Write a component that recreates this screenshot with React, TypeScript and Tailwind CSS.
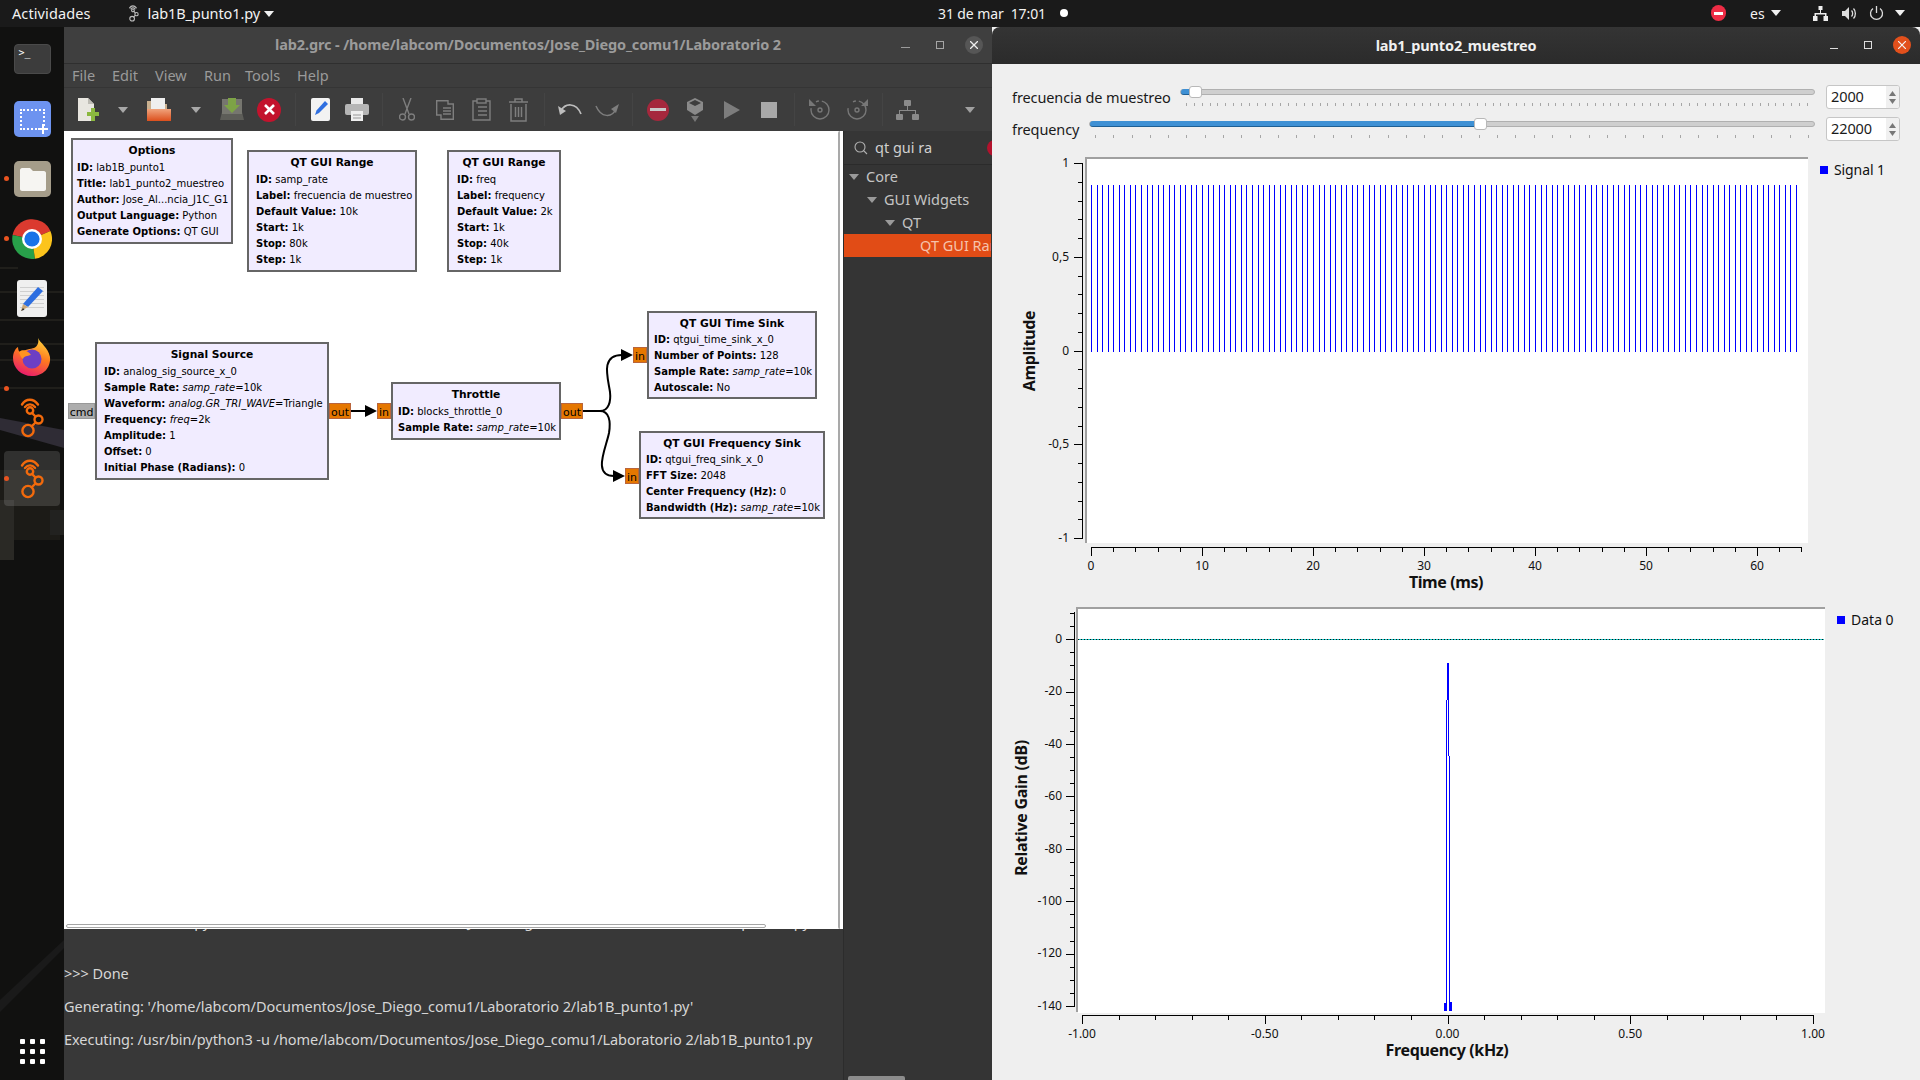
import React from "react";

const Triangle = ({ className = "" }: { className?: string }) => (
  <svg width="10" height="6" viewBox="0 0 10 6" className={className}><path d="M0 0H10L5 6Z" fill="currentColor" /></svg>
);

const GnuRadio = ({ className = "", color = "#f26a0c", w = 25, h = 40, sw = 2.4 }: { className?: string; color?: string; w?: number; h?: number; sw?: number }) => (
  <svg width={w} height={h} viewBox="0 0 24 40" className={className} fill="none" stroke={color} strokeWidth={sw} strokeLinecap="round">
    <path d="M1.5 6.5C5.5 0.2 13 0.2 17.5 6.5" />
    <path d="M4.5 9C7.5 5.5 11.5 5.5 14.5 9" />
    <circle cx="9.5" cy="12.5" r="3.2" />
    <circle cx="18" cy="21.5" r="4" />
    <circle cx="7.5" cy="32.5" r="5.6" />
    <path d="M11.5 15L15 18.5M15 24.5L11.5 28" />
  </svg>
);

const Dock = () => (
  <div className="relative w-[64px] shrink-0 bg-[#111110] overflow-hidden flex flex-col items-center">
    <svg className="absolute left-0 top-0" width="64" height="1053" viewBox="0 27 64 1053">
      <g stroke="#26251f" strokeWidth="1.5" fill="none">
        <path d="M0 268H18M0 292H64M0 320H64M0 344H64M0 360H64M0 388H64" />
      </g>
      <path d="M0 418L64 430V448L0 430Z" fill="#2f2c35" />
      <path d="M0 470H60V540H0Z" fill="#1c1b17" />
      <path d="M0 500H14V560H0Z" fill="#2a2925" />
      <path d="M50 510H64V535H50Z" fill="#222220" />
      <path d="M0 1000L64 940V948L0 1012Z" fill="#1a1a1a" />
    </svg>
    {/* terminal */}
    <div className="relative mt-[17px] w-[37px] h-[30px] rounded-[4px] bg-[#3c3c3c] border border-[#4a4a4a]">
      <span className="absolute left-[4px] top-[1px] text-white text-[10px] leading-[14px] font-['DejaVu_Sans_Mono',monospace]">&gt;_</span>
    </div>
    {/* screenshot */}
    <div className="relative mt-[27px] w-[37px] h-[36px] rounded-[5px] bg-[#6d93f0] flex items-center justify-center">
      <div className="w-[25px] h-[21px] border-2 border-dotted border-white" />
      <svg className="absolute right-[3px] bottom-[3px]" width="10" height="10"><path d="M5 0V10M0 5H10" stroke="#fff" strokeWidth="2" /></svg>
    </div>
    {/* files */}
    <div className="relative mt-[24px] w-[37px] h-[36px] rounded-[5px] bg-[#a59d8a] flex items-center justify-center">
      <svg width="27" height="23" viewBox="0 0 27 23"><path d="M1 2C1 1 2 0 3 0H11L14 3H25C26 3 27 4 27 5V21C27 22 26 23 25 23H3C2 23 1 22 1 21Z" fill="#f6f5f2" /></svg>
    </div>
    {/* chrome */}
    <svg className="relative mt-[22px]" width="40" height="40" viewBox="-20 -20 40 40">
      <path d="M0 0L-19.4 -4A20 20 0 0 1 18.4 -8Z" fill="#db3a2f" />
      <path d="M0 0L-19.4 -4A20 20 0 0 0 3 19.8Z" fill="#28a04a" />
      <path d="M0 0L18.4 -8A20 20 0 0 1 3 19.8Z" fill="#fcc41c" />
      <circle r="10" fill="#fff" />
      <circle r="7.6" fill="#1a73e8" />
    </svg>
    {/* gedit */}
    <div className="relative mt-[21px] w-[30px] h-[37px] rounded-[3px] bg-[#efefef] flex flex-col gap-[3px] pt-[7px] px-[3px]">
      <div className="h-px bg-[#cfcfcf]" /><div className="h-px bg-[#cfcfcf]" /><div className="h-px bg-[#cfcfcf]" /><div className="h-px bg-[#cfcfcf]" /><div className="h-px bg-[#cfcfcf]" /><div className="h-px bg-[#cfcfcf]" />
      <svg className="absolute left-[4px] top-[7px]" width="23" height="25" viewBox="0 0 23 25"><path d="M17 0L22 4L7 20L2 17Z" fill="#2d6ee0" /><path d="M2 17L7 20L0 24Z" fill="#caa777" /><path d="M0 24L2 21L3.5 22.8Z" fill="#333" /></svg>
    </div>
    {/* firefox */}
    <svg className="relative mt-[21px]" width="38" height="39" viewBox="0 0 38 39">
      <defs>
        <linearGradient id="ff" x1="0.7" y1="0" x2="0.3" y2="1"><stop offset="0" stopColor="#ffd23c" /><stop offset="0.45" stopColor="#ff7a1e" /><stop offset="1" stopColor="#e8186f" /></linearGradient>
      </defs>
      <path d="M25 0C27 5 35 9 37 19C38 30 30 38 19 38C8 38 0 30 0 20C0 15 2 11 5 9C5 12 6 14 8 15C11 11 18 11 21 10C25 8 26 4 25 0Z" fill="url(#ff)" />
      <circle cx="19" cy="21" r="9.5" fill="#6c3fc4" />
      <path d="M6 14C10 10 16 14 18 17C14 18 11 18 10 21C8 20 7 17 6 14Z" fill="#ff9420" />
    </svg>
    <GnuRadio className="relative mt-[21px]" />
    <div className="relative mt-[13px] w-[56px] h-[55px] rounded-[4px] bg-[#ffffff22] flex items-center justify-center">
      <GnuRadio />
    </div>
    <div className="absolute left-[4px] top-[149px] w-[5px] h-[5px] rounded-full bg-[#e95420]" />
    <div className="absolute left-[4px] top-[209px] w-[5px] h-[5px] rounded-full bg-[#e95420]" />
    <div className="absolute left-[4px] top-[359px] w-[5px] h-[5px] rounded-full bg-[#e95420]" />
    <div className="absolute left-[4px] top-[449px] w-[5px] h-[5px] rounded-full bg-[#e95420]" />
    <div className="mt-auto mb-[16px] relative grid grid-cols-3 gap-x-[5px] gap-y-[5px]">
      {Array.from({ length: 9 }).map((_, i) => <div key={i} className="w-[5px] h-[5px] rounded-[1px] bg-white" />)}
    </div>
  </div>
);

const TopBar = () => (
  <div className="h-[27px] shrink-0 bg-[#1a1a1a] text-[#f2f2f2] text-[14.5px] flex items-center relative">
    <span className="ml-[12px] tracking-[0.1px]">Actividades</span>
    <GnuRadio className="ml-[38px] mr-[9px]" color="#bdbdbd" w={10} h={17} sw={2.6} />
    <span className="tracking-[-0.1px]">lab1B_punto1.py</span>
    <Triangle className="ml-[4px]" />
    <span className="absolute left-[938px] tracking-[-0.1px] text-[14px]">31 de mar&nbsp; 17:01</span>
    <div className="absolute left-[1060px] top-[9px] w-[8px] h-[8px] rounded-full bg-white" />
    <div className="absolute left-[1711px] top-[5px] w-[15px] h-[16px] rounded-full bg-[#ee2c45] flex items-center justify-center"><div className="w-[9px] h-[3px] bg-white" /></div>
    <span className="absolute left-[1750px] text-[14px]">es</span>
    <Triangle className="absolute left-[1771px] top-[10px]" />
    <svg className="absolute left-[1813px] top-[6px]" width="15" height="15" viewBox="0 0 15 15" fill="#eee"><path d="M5.5 0H9.5V4H8V7H13.5V10H15V15H10.5V10H12V8.5H3V10H4.5V15H0V10H1.5V7H7V4H5.5Z" /></svg>
    <svg className="absolute left-[1842px] top-[6px]" width="15" height="15" viewBox="0 0 15 15" fill="none" stroke="#ddd" strokeWidth="1.3"><path d="M0 5H3L7 1V14L3 10H0Z" fill="#ddd" stroke="none" /><path d="M9.5 4.5C11 6 11 9 9.5 10.5M11.5 2.5C14 5 14 10 11.5 12.5" /></svg>
    <svg className="absolute left-[1869px] top-[5px]" width="15" height="16" viewBox="0 0 15 16" fill="none" stroke="#ddd" strokeWidth="1.3"><path d="M7.5 1V8M4 3.5A6 6 0 1 0 11 3.5" /></svg>
    <Triangle className="absolute left-[1895px] top-[10px]" />
  </div>
);

const D = "#7e7e7e";
const Tb = () => (
  <div className="h-[43px] shrink-0 flex items-center pl-[6px] bg-[#3d3d3d] text-[#b8b8b8]">
    <div className="w-[35px] flex justify-center"><svg width="22" height="24" viewBox="0 0 22 24"><path d="M1 0H11L17 6V23H1Z" fill="#e8e6e0" /><path d="M11 0L17 6H11Z" fill="#bdbbb4" /><path d="M14 10H18V14H22V18H18V23H14V18H10V14H14Z" fill="#8bb83f" /></svg></div>
    <div className="w-[35px] flex justify-center text-[#a8a8a8]"><Triangle /></div>
    <div className="w-[38px] flex justify-center"><svg width="24" height="23" viewBox="0 0 24 23"><defs><linearGradient id="opn" x1="0" y1="0" x2="0" y2="1"><stop offset="0" stopColor="#f0a37c" /><stop offset="1" stopColor="#dc4f1c" /></linearGradient></defs><path d="M0 3H8L9 6H20V13H0Z" fill="#c9b08f" /><path d="M4 0H18V13H4Z" fill="#efefef" /><path d="M0 11H24V23H0Z" fill="url(#opn)" /></svg></div>
    <div className="w-[35px] flex justify-center text-[#a8a8a8]"><Triangle /></div>
    <div className="w-[38px] flex justify-center"><svg width="24" height="23" viewBox="0 0 24 23"><path d="M2 14H22L24 22H0Z" fill="#5d5d58" /><path d="M2 1H22V16H2Z" fill="#76766f" /><path d="M8 0H16V7H20L12 15L4 7H8Z" fill="#7da346" /></svg></div>
    <div className="w-[36px] flex justify-center"><div className="w-[24px] h-[24px] rounded-full bg-[#c3132d] flex items-center justify-center"><svg width="11" height="11"><path d="M1 1L10 10M10 1L1 10" stroke="#fff" strokeWidth="2.6" /></svg></div></div>
    <div className="w-[16px] flex justify-center"><div className="w-px h-[33px] bg-[#444]" /></div>
    <div className="w-[35px] flex justify-center"><svg width="20" height="23" viewBox="0 0 20 23"><rect width="19" height="23" rx="2" fill="#f2f2f2" /><path d="M14 3L17 6L8 15L4 17L5.5 12.5Z" fill="#2f6fe0" /></svg></div>
    <div className="w-[38px] flex justify-center"><svg width="24" height="23" viewBox="0 0 24 23"><rect x="6" width="12" height="7" fill="#e8e8e8" /><rect y="6" width="24" height="11" rx="2" fill="#b5b5b5" /><rect x="6" y="13" width="12" height="10" fill="#efefef" /><path d="M8 17H16M8 20H16" stroke="#999" /></svg></div>
    <div className="w-[12px] flex justify-center"><div className="w-px h-[33px] bg-[#444]" /></div>
    <div className="w-[38px] flex justify-center"><svg width="16" height="23" viewBox="0 0 16 23" fill="none" stroke={D} strokeWidth="1.4"><path d="M4 0L10 16M12 0L6 16" /><circle cx="3.5" cy="19" r="3" /><circle cx="12.5" cy="19" r="3" /></svg></div>
    <div className="w-[37px] flex justify-center"><svg width="18" height="20" viewBox="0 0 18 20" fill="none" stroke={D} strokeWidth="1.4"><path d="M0.7 0.7H12V4H17.3V19.3H5V15H0.7Z" /><path d="M7 8H15M7 11H15M7 14H15" /></svg></div>
    <div className="w-[37px] flex justify-center"><svg width="19" height="23" viewBox="0 0 19 23" fill="none" stroke={D} strokeWidth="1.4"><path d="M5 3H1V22H18V3H14" /><rect x="5" y="1" width="9" height="4" /><path d="M6 9H15M6 13H15M6 17H15" /></svg></div>
    <div className="w-[37px] flex justify-center"><svg width="19" height="24" viewBox="0 0 19 24" fill="none" stroke={D} strokeWidth="1.5"><path d="M0 4H19M6 4V1H13V4M2 6V23H17V6M6.5 9V19M9.5 9V19M12.5 9V19" /></svg></div>
    <div className="w-[14px] flex justify-center"><div className="w-px h-[33px] bg-[#444]" /></div>
    <div className="w-[37px] flex justify-center"><svg width="24" height="14" viewBox="0 0 24 14" fill="none" stroke="#bdbdbd" strokeWidth="1.7"><path d="M3 8C7 0 18 -1 23 11" /><path d="M0 3L2 12L8 8Z" fill="#bdbdbd" stroke="none" /></svg></div>
    <div className="w-[37px] flex justify-center"><svg width="24" height="14" viewBox="0 0 24 14" fill="none" stroke={D} strokeWidth="1.5"><path d="M1 3C6 15 17 15 21 6" /><path d="M24 1L21 10L16 6Z" fill={D} stroke="none" /></svg></div>
    <div className="w-[14px] flex justify-center"><div className="w-px h-[33px] bg-[#444]" /></div>
    <div className="w-[38px] flex justify-center"><div className="w-[22px] h-[22px] rounded-full bg-[#a5283d] flex items-center justify-center"><div className="w-[16px] h-[3px] bg-[#c9c9c9]" /></div></div>
    <div className="w-[36px] flex justify-center"><svg width="16" height="24" viewBox="0 0 16 24"><path d="M8 0L16 4V12L8 17L0 12V4Z" fill="#8a8a8a" /><path d="M8 2L14 5L8 8L2 5Z" fill="#3d3d3d" /><path d="M4 18H12L8 24Z" fill="#777" /></svg></div>
    <div className="w-[38px] flex justify-center"><svg width="16" height="18" viewBox="0 0 16 18"><path d="M0 0L16 9L0 18Z" fill="#7d7d7d" /></svg></div>
    <div className="w-[36px] flex justify-center"><div className="w-[16px] h-[16px] bg-[#a8a8a8]" /></div>
    <div className="w-[14px] flex justify-center"><div className="w-px h-[33px] bg-[#444]" /></div>
    <div className="w-[38px] flex justify-center"><svg width="22" height="21" viewBox="0 0 22 21" fill="none" stroke="#777" strokeWidth="1.4"><circle cx="11" cy="11" r="9" strokeDasharray="30 8 3 3" /><circle cx="11" cy="11" r="2" /><path d="M0 0V7H7Z" fill="#777" stroke="none" /></svg></div>
    <div className="w-[36px] flex justify-center"><svg width="22" height="21" viewBox="0 0 22 21" fill="none" stroke="#777" strokeWidth="1.4"><circle cx="11" cy="11" r="9" strokeDasharray="30 8 3 3" /><circle cx="11" cy="11" r="2" /><path d="M22 0V7H15Z" fill="#777" stroke="none" /></svg></div>
    <div className="w-[14px] flex justify-center"><div className="w-px h-[33px] bg-[#444]" /></div>
    <div className="w-[36px] flex justify-center"><svg width="23" height="20" viewBox="0 0 23 20" fill="#8a8a8a"><rect x="8" width="7" height="6" rx="1" /><rect y="14" width="7" height="6" rx="1" /><rect x="16" y="14" width="7" height="6" rx="1" /><path d="M11 6H12V10H20V14H19V11H4V14H3V10H11Z" /></svg></div>
    <div className="ml-[40px] text-[#a0a0a0]"><Triangle /></div>
  </div>
);

const Block = ({ className, pad, title, rows }: { className: string; pad: string; title: string; rows: React.ReactNode[] }) => (
  <div className={`absolute bg-[#f1ecff] border-2 border-[#666666] text-black text-[10px] leading-[16px] pt-[3px] font-['DejaVu_Sans',sans-serif] whitespace-nowrap ${className}`}>
    <div className="text-center font-bold text-[10.7px]">{title}</div>
    <div className={pad}>
      {rows.map((r, i) => <div key={i}>{r}</div>)}
    </div>
  </div>
);
const K = ({ k, v, i }: { k: string; v?: string; i?: string }) => (
  <><b>{k}:</b> {i ? <i>{i}</i> : null}{v}</>
);
const Port = ({ className, label }: { className: string; label: string }) => (
  <div className={`absolute h-[16px] border border-[#b9653c] bg-[#e57700] text-black text-[11px] leading-[15px] pt-px text-center font-['DejaVu_Sans',sans-serif] ${className}`}>{label}</div>
);

const Canvas = () => (
  <div className="relative h-[798px] shrink-0 bg-white overflow-hidden">
    <Block className="left-[7px] top-[7px] w-[162px] h-[106px]" pad="pl-[4px] pt-px" title="Options" rows={[
      <K k="ID" v="lab1B_punto1" />, <K k="Title" v="lab1_punto2_muestreo" />, <K k="Author" v="Jose_Al...ncia_J1C_G1" />, <K k="Output Language" v="Python" />, <K k="Generate Options" v="QT GUI" />]} />
    <Block className="left-[183px] top-[19px] w-[170px] h-[122px]" pad="pl-[7px] pt-px" title="QT GUI Range" rows={[
      <K k="ID" v="samp_rate" />, <K k="Label" v="frecuencia de muestreo" />, <K k="Default Value" v="10k" />, <K k="Start" v="1k" />, <K k="Stop" v="80k" />, <K k="Step" v="1k" />]} />
    <Block className="left-[383px] top-[19px] w-[114px] h-[122px]" pad="pl-[8px] pt-px" title="QT GUI Range" rows={[
      <K k="ID" v="freq" />, <K k="Label" v="frequency" />, <K k="Default Value" v="2k" />, <K k="Start" v="1k" />, <K k="Stop" v="40k" />, <K k="Step" v="1k" />]} />
    <Block className="left-[31px] top-[211px] w-[234px] h-[138px]" pad="pl-[7px] pt-px" title="Signal Source" rows={[
      <K k="ID" v="analog_sig_source_x_0" />, <K k="Sample Rate" i="samp_rate" v="=10k" />, <K k="Waveform" i="analog.GR_TRI_WAVE" v="=Triangle" />, <K k="Frequency" i="freq" v="=2k" />, <K k="Amplitude" v="1" />, <K k="Offset" v="0" />, <K k="Initial Phase (Radians)" v="0" />]} />
    <Block className="left-[327px] top-[251px] w-[170px] h-[58px]" pad="pl-[5px] pt-px" title="Throttle" rows={[
      <K k="ID" v="blocks_throttle_0" />, <K k="Sample Rate" i="samp_rate" v="=10k" />]} />
    <Block className="left-[583px] top-[180px] w-[170px] h-[88px]" pad="pl-[5px]" title="QT GUI Time Sink" rows={[
      <K k="ID" v="qtgui_time_sink_x_0" />, <K k="Number of Points" v="128" />, <K k="Sample Rate" i="samp_rate" v="=10k" />, <K k="Autoscale" v="No" />]} />
    <Block className="left-[575px] top-[300px] w-[186px] h-[88px]" pad="pl-[5px]" title="QT GUI Frequency Sink" rows={[
      <K k="ID" v="qtgui_freq_sink_x_0" />, <K k="FFT Size" v="2048" />, <K k="Center Frequency (Hz)" v="0" />, <K k="Bandwidth (Hz)" i="samp_rate" v="=10k" />]} />
    <div className="absolute left-[4px] top-[272px] w-[27px] h-[16px] border border-[#999] bg-[#adadad] text-black text-[11px] leading-[15px] pt-px text-center font-['DejaVu_Sans',sans-serif]">cmd</div>
    <Port className="left-[265px] top-[272px] w-[22px]" label="out" />
    <Port className="left-[313px] top-[272px] w-[14px]" label="in" />
    <Port className="left-[497px] top-[272px] w-[22px]" label="out" />
    <Port className="left-[569px] top-[216px] w-[14px]" label="in" />
    <Port className="left-[561px] top-[337px] w-[14px]" label="in" />
    <svg className="absolute left-0 top-0" width="775" height="798" viewBox="64 131 775 798" fill="none" stroke="#000" strokeWidth="2">
      <path d="M351 411H366" />
      <path d="M365 405L377 411L365 417Z" fill="#000" stroke="none" />
      <path d="M583 411H600C609 411 611 401 610 392C608 378 600 355 622 355" />
      <path d="M621 349L633 355L621 361Z" fill="#000" stroke="none" />
      <path d="M583 411H600C609 411 611 421 609 433C606 448 592 476 614 476" />
      <path d="M613 470L625 476L613 482Z" fill="#000" stroke="none" />
    </svg>
    <div className="absolute left-[774px] top-0 bottom-0 w-[4px] bg-white border-l-2 border-[#a9a9a9] rounded-sm" />
    <div className="absolute left-[2px] top-[793px] w-[700px] h-[4px] border border-[#a5a5a5] rounded-[2px]" />
  </div>
);

const ConsoleLine = ({ children, className = "" }: { children: React.ReactNode; className?: string }) => (
  <div className={`leading-[33px] ${className}`}>{children}</div>
);

const LeftWindow = () => (
  <div className="w-[928px] shrink-0 flex flex-col bg-[#3d3d3d] font-['Noto_Sans',sans-serif]">
    <div className="h-[37px] shrink-0 bg-[#3f3f3f] border-b border-[#2f2f2f] relative flex items-center justify-center">
      <span className="text-[14.5px] font-bold text-[#9b9b9b] tracking-[-0.13px]">lab2.grc - /home/labcom/Documentos/Jose_Diego_comu1/Laboratorio 2</span>
      <div className="absolute left-[837px] top-[20px] w-[9px] h-px bg-[#9b9b9b]" />
      <div className="absolute left-[872px] top-[14px] w-[8px] h-[8px] border border-[#a5a5a5]" />
      <div className="absolute left-[901px] top-[9px] w-[18px] h-[18px] rounded-full bg-[#565656] flex items-center justify-center">
        <svg width="8" height="8"><path d="M0 0L8 8M8 0L0 8" stroke="#eee" strokeWidth="1.3" /></svg>
      </div>
    </div>
    <div className="h-[24px] shrink-0 border-b border-[#353535] flex items-center pl-[8px] text-[14.5px] text-[#9a9a9a]">
      <span className="w-[40px]">File</span>
      <span className="w-[43px]">Edit</span>
      <span className="w-[49px]">View</span>
      <span className="w-[41px]">Run</span>
      <span className="w-[52px]">Tools</span>
      <span>Help</span>
    </div>
    <Tb />
    <div className="flex-1 flex min-h-0">
      <div className="w-[779px] shrink-0 flex flex-col min-h-0">
        <Canvas />
        <div className="flex-1 bg-[#383838] overflow-hidden text-[14.5px] text-[#d6d6d6] tracking-[-0.05px] whitespace-pre">
          <ConsoleLine className="-mt-[24px] mb-[19px] pl-[71px]">/usr/bin/python3 -u /home/labcom/Documentos/Jose_Diego_comu1/Laboratorio 2/lab1B_punto1.py</ConsoleLine>
          <ConsoleLine>&gt;&gt;&gt; Done</ConsoleLine>
          <ConsoleLine>Generating: '/home/labcom/Documentos/Jose_Diego_comu1/Laboratorio 2/lab1B_punto1.py'</ConsoleLine>
          <ConsoleLine>Executing: /usr/bin/python3 -u /home/labcom/Documentos/Jose_Diego_comu1/Laboratorio 2/lab1B_punto1.py</ConsoleLine>
        </div>
      </div>
      <div className="relative flex-1 min-w-0 bg-[#343434] border-l border-[#2c2c2c] overflow-hidden text-[14.5px] text-[#c4c4c4] whitespace-nowrap">
        <div className="relative h-[34px] rounded-tl-[5px] border-b border-[#2b2b2b] flex items-center bg-[#363636]">
          <svg className="ml-[10px]" width="14" height="14" viewBox="0 0 14 14" fill="none" stroke="#b0b0b0" strokeWidth="1.1"><circle cx="6" cy="6" r="5" /><path d="M9.5 9.5L13 13" /></svg>
          <span className="ml-[7px] text-[#d0d0d0]">qt gui ra</span>
          <div className="absolute left-[143px] top-[9px] w-[16px] h-[16px] rounded-full bg-[#b3122d]" />
        </div>
        <div className="h-[23px] flex items-center"><Triangle className="ml-[5px] mr-[7px] text-[#9a9a9a]" />Core</div>
        <div className="h-[23px] flex items-center"><Triangle className="ml-[23px] mr-[7px] text-[#9a9a9a]" />GUI Widgets</div>
        <div className="h-[23px] flex items-center"><Triangle className="ml-[41px] mr-[7px] text-[#9a9a9a]" />QT</div>
        <div className="h-[23px] flex items-center bg-[#e14c16] pl-[76px] text-[#f6c3ac] w-[147px]"><span className="overflow-hidden w-[71px]">QT GUI Range</span></div>
        <div className="absolute left-[4px] bottom-0 w-[57px] h-[4px] rounded-t-[2px] bg-[#8c8c8c]" />
      </div>
    </div>
  </div>
);

const Slider = ({ ticks, fillClass, handleClass, trackClass }: { ticks: number; fillClass: string; handleClass: string; trackClass: string }) => (
  <div className={`flex flex-col ${trackClass}`}>
    <div className="relative h-[6px] mt-[4px] rounded-[3px] bg-[#cfcfcf] border border-[#b0b0b0]">
      <div className={`absolute left-0 -top-px h-[6px] rounded-l-[3px] bg-[#3e90d4] border-b border-[#1e5f94] ${fillClass}`} />
      <div className={`absolute -top-[4px] w-[13px] h-[12px] rounded-[3px] bg-white border border-[#b8b8b8] ${handleClass}`} />
    </div>
    <div className="mt-[8px] mx-[6px] h-[3px] flex justify-between">
      {Array.from({ length: ticks }).map((_, i) => <div key={i} className="w-px h-[3px] bg-[#a6a6a6]" />)}
    </div>
  </div>
);

const Spin = ({ value }: { value: string }) => (
  <div className="w-[74px] h-[24px] ml-[11px] shrink-0 bg-white border border-[#c6c6c6] rounded-[3px] flex items-center overflow-hidden">
    <span className="ml-[4px] flex-1 text-[14.5px] text-[#1a1a1a] tracking-[-0.1px]">{value}</span>
    <div className="w-[13px] h-full bg-[#f0f0f0] flex flex-col items-center justify-center gap-[3px] text-[#777]">
      <svg width="7" height="5"><path d="M0 5L3.5 0L7 5Z" fill="currentColor" /></svg>
      <svg width="7" height="5"><path d="M0 0L3.5 5L7 0Z" fill="currentColor" /></svg>
    </div>
  </div>
);

const range = (n: number) => Array.from({ length: n }, (_, i) => i);

const TimePlot = () => (
  <svg className="block w-[928px] h-[450px]" viewBox="992 150 928 450" fontFamily="'Noto Sans',sans-serif" fill="#111">
    <rect x="1087" y="159" width="721" height="384" fill="#fff" />
    <rect x="1085" y="157" width="723" height="2" fill="#a0a0a0" />
    <rect x="1085" y="157" width="2" height="386" fill="#a0a0a0" />
    <g stroke="#0000ff" strokeWidth="1" shapeRendering="crispEdges">
      {range(128).map(i => { const x = Math.round(1091 + i * 5.55) + 0.5; return <line key={i} x1={x} x2={x} y1="185" y2="352" />; })}
    </g>
    <g stroke="#000" shapeRendering="crispEdges">
      <line x1="1082.5" x2="1082.5" y1="163" y2="539" />
      {range(21).map(i => { const y = Math.round(163 + i * 18.75) + 0.5; return <line key={i} x1={i % 5 === 0 ? 1074 : 1078} x2="1082" y1={y} y2={y} />; })}
      <line x1="1091" x2="1802" y1="547.5" y2="547.5" />
      {range(33).map(i => { const x = Math.round(1091 + i * 22.2) + 0.5; return <line key={i} x1={x} x2={x} y1="547" y2={i % 5 === 0 ? 556 : 552} />; })}
    </g>
    <g fontSize="12" textAnchor="end">
      {[["1", 163], ["0,5", 257], ["0", 351], ["-0,5", 444], ["-1", 538]].map(([t, y]) => <text key={t as string} x="1069" y={(y as number) + 4}>{t}</text>)}
    </g>
    <g fontSize="12" textAnchor="middle">
      {[0, 10, 20, 30, 40, 50, 60].map(v => <text key={v} x={1091 + v * 11.1} y="570">{v}</text>)}
    </g>
    <text x="1446" y="588" fontSize="16" fontWeight="700" textAnchor="middle" letterSpacing="-0.4">Time (ms)</text>
    <text transform="translate(1035 351) rotate(-90)" fontSize="16" fontWeight="700" textAnchor="middle" letterSpacing="-0.3">Amplitude</text>
    <rect x="1820" y="166" width="8" height="8" fill="#0000ff" />
    <text x="1834" y="175" fontSize="14" letterSpacing="-0.1">Signal 1</text>
  </svg>
);

const FreqPlot = () => (
  <svg className="block w-[928px] h-[480px]" viewBox="992 600 928 480" fontFamily="'Noto Sans',sans-serif" fill="#111">
    <rect x="1078" y="609" width="747" height="404" fill="#fff" />
    <rect x="1076" y="607" width="749" height="2" fill="#a0a0a0" />
    <rect x="1076" y="607" width="2" height="405" fill="#a0a0a0" />
    <line x1="1078" x2="1824" y1="639.5" y2="639.5" stroke="#19c5c5" shapeRendering="crispEdges" />
    <line x1="1078" x2="1824" y1="639.5" y2="639.5" stroke="#111" strokeDasharray="1 2" shapeRendering="crispEdges" />
    <g fill="#0000ff" shapeRendering="crispEdges">
      <rect x="1447" y="663" width="2" height="37" />
      <rect x="1446" y="700" width="1" height="311" />
      <rect x="1448" y="700" width="1" height="56" />
      <rect x="1449" y="756" width="1" height="255" />
      <rect x="1444" y="1003" width="2" height="8" />
      <rect x="1449" y="1002" width="3" height="9" />
    </g>
    <g stroke="#000" shapeRendering="crispEdges">
      <line x1="1074.5" x2="1074.5" y1="612" y2="1007" />
      {range(31).map(i => { const y = Math.round(1006 - i * 13.1) + 0.5; return <line key={i} x1={i % 4 === 0 ? 1066 : 1070} x2="1074" y1={y} y2={y} />; })}
      <line x1="1082" x2="1814" y1="1015.5" y2="1015.5" />
      {range(21).map(i => { const x = Math.round(1082 + i * 36.55) + 0.5; return <line key={i} x1={x} x2={x} y1="1015" y2={i % 5 === 0 ? 1024 : 1020} />; })}
    </g>
    <g fontSize="12" textAnchor="end">
      {[0, 20, 40, 60, 80, 100, 120, 140].map(v => <text key={v} x="1062" y={643 + v * 2.62}>{v === 0 ? "0" : `-${v}`}</text>)}
    </g>
    <g fontSize="12" textAnchor="middle">
      {["-1.00", "-0.50", "0.00", "0.50", "1.00"].map((t, i) => <text key={t} x={1082 + i * 182.75} y="1038">{t}</text>)}
    </g>
    <text x="1447" y="1056" fontSize="16" fontWeight="700" textAnchor="middle" letterSpacing="-0.35">Frequency (kHz)</text>
    <text transform="translate(1027 808) rotate(-90)" fontSize="16" fontWeight="700" textAnchor="middle" letterSpacing="-0.3">Relative Gain (dB)</text>
    <rect x="1837" y="616" width="8" height="8" fill="#0000ff" />
    <text x="1851" y="625" fontSize="14">Data 0</text>
  </svg>
);

const RightWindow = () => (
  <div className="flex-1 min-w-0 flex flex-col bg-[#efefef] font-['Noto_Sans',sans-serif]">
    <div className="h-[37px] shrink-0 rounded-t-[8px] bg-gradient-to-b from-[#343434] to-[#2b2b2b] relative flex items-center justify-center">
      <span className="text-[14.5px] font-bold text-[#f0f0f0] tracking-[-0.15px]">lab1_punto2_muestreo</span>
      <div className="absolute left-[838px] top-[21px] w-[8px] h-px bg-[#ddd]" />
      <div className="absolute left-[872px] top-[14px] w-[8px] h-[8px] border border-[#ddd]" />
      <div className="absolute left-[901px] top-[9px] w-[18px] h-[18px] rounded-full bg-[#e2501c] flex items-center justify-center">
        <svg width="8" height="8"><path d="M0 0L8 8M8 0L0 8" stroke="#f4f4f4" strokeWidth="1.2" /></svg>
      </div>
    </div>
    <div className="h-[49px] shrink-0 flex flex-col gap-[8px] pt-[21px] pl-[20px] pr-[20px] box-content">
      <div className="flex h-[24px] items-start text-[14.5px] text-[#1a1a1a] tracking-[-0.1px]">
        <span className="w-[168px] shrink-0 leading-[24px]">frecuencia de muestreo</span>
        <Slider ticks={80} trackClass="flex-1" fillClass="w-[10px]" handleClass="left-[8px]" />
        <Spin value="2000" />
      </div>
      <div className="flex h-[24px] items-start text-[14.5px] text-[#1a1a1a] tracking-[-0.1px]">
        <span className="w-[77px] shrink-0 leading-[24px]">frequency</span>
        <Slider ticks={40} trackClass="flex-1" fillClass="w-[387px]" handleClass="left-[384px]" />
        <Spin value="22000" />
      </div>
    </div>
    <div className="h-[16px] shrink-0" />
    <TimePlot />
    <FreqPlot />
  </div>
);

export default function App() {
  return (
    <div className="w-[1920px] h-[1080px] overflow-hidden flex flex-col bg-[#111] font-['Noto_Sans',sans-serif]">
      <TopBar />
      <div className="flex-1 flex min-h-0">
        <Dock />
        <LeftWindow />
        <RightWindow />
      </div>
    </div>
  );
}
